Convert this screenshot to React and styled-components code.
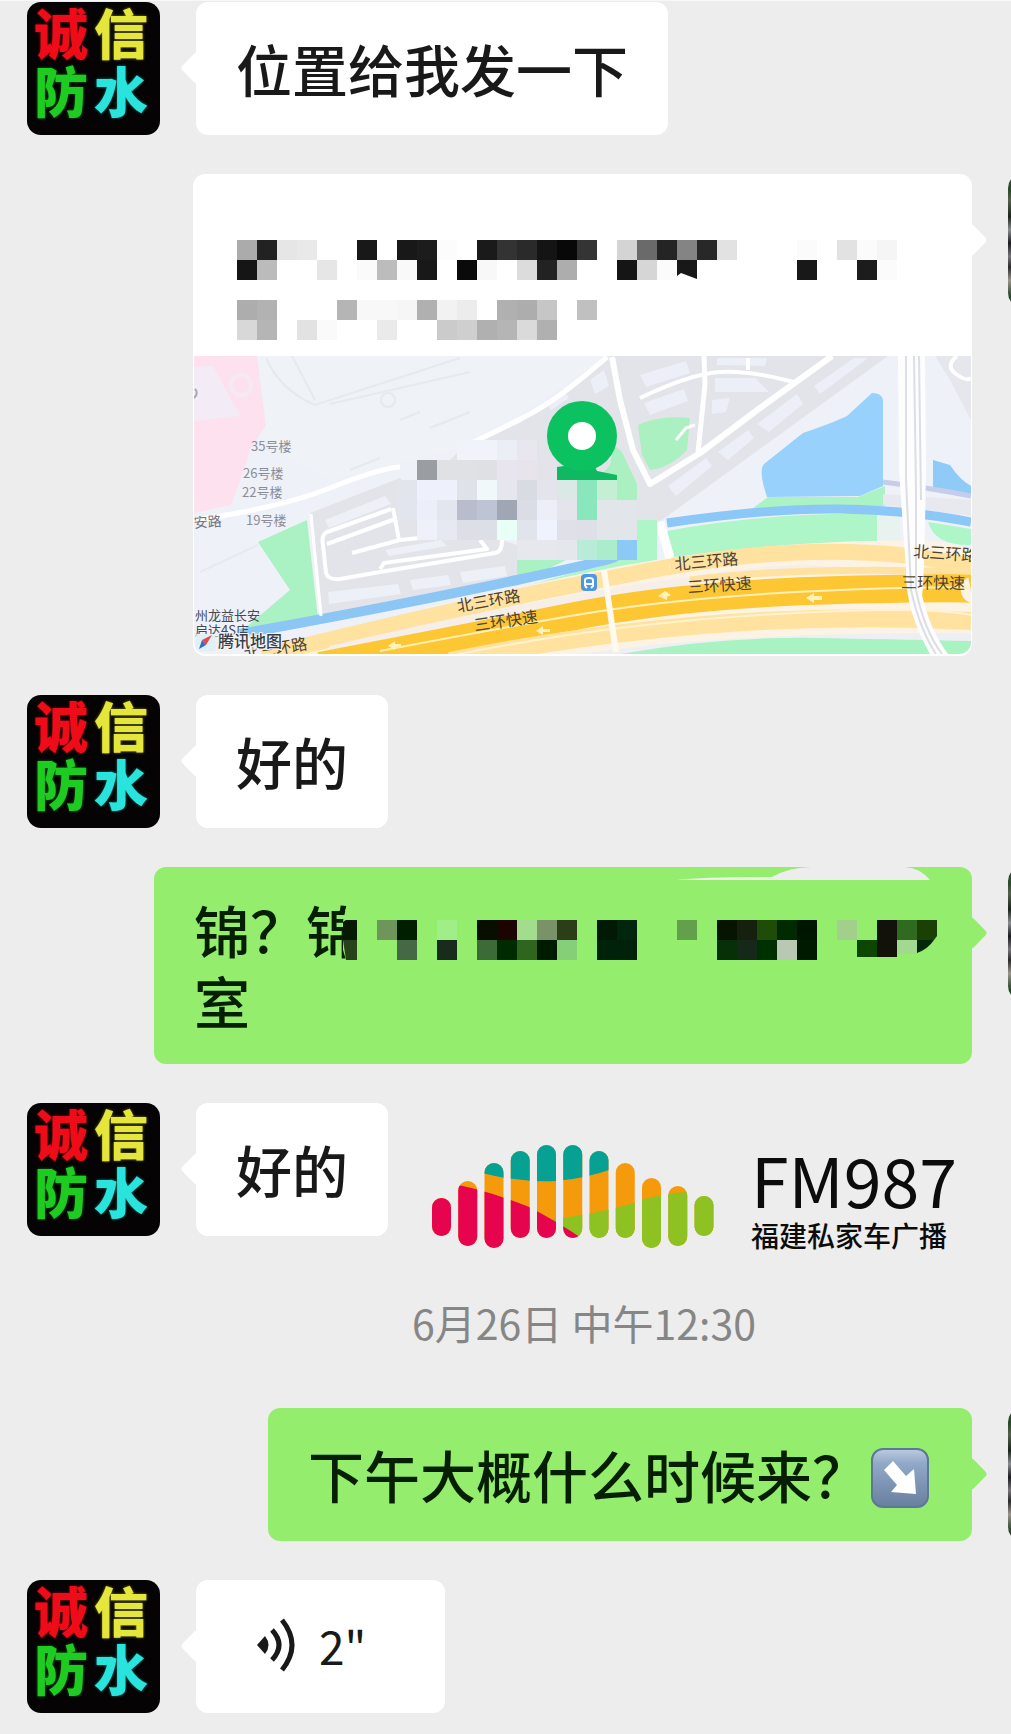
import React from "react";
import styled, { createGlobalStyle, css } from "styled-components";

const GlobalStyle = createGlobalStyle`
  *, *::before, *::after { box-sizing: border-box; }
  body {
    margin: 0;
    background: #ededed;
    color: #191919;
    font-family: "Noto Sans CJK SC", "Liberation Sans", sans-serif;
    overflow-x: hidden;
  }
`;

const Chat = styled.main`
  display: flex;
  flex-direction: column;
  gap: 39px;
  padding: 1px 0 21px;
  border-top: 1px solid #f8f8f8;
  overflow: hidden;
`;

const Row = styled.article`
  position: relative;
  display: flex;
  align-items: flex-start;
  gap: 36px;
  padding-left: ${(p) => p.$indent || 27}px;
  ${(p) => p.$mine && css`justify-content: flex-end;`}
`;

const AvatarTile = styled.div`
  flex: none;
  width: 133px;
  height: 133px;
  display: grid;
  grid-template-columns: 60px 60px;
  grid-template-rows: 58px 58px;
  justify-content: center;
  padding: 1px 5px 0 0;
  border-radius: 14px;
  background: #050303;
  font-size: 54px;
  font-weight: 900;
  line-height: 58px;
  text-align: center;
`;

const Glyph = styled.span`
  color: ${(p) => p.$color};
  text-shadow: 0 0 3px ${(p) => p.$color}88;
`;

const OwnAvatar = styled.div`
  flex: none;
  width: 133px;
  height: 133px;
  margin-right: -130px;
  border-radius: 14px;
  background: linear-gradient(
    #2c4a2c 0 12%, #55604e 20%, #1c241c 32%, #8b8d90 42%,
    #1b1b20 52%, #77757a 62%, #2b2b2b 70%, #9a948c 80%, #27452a 92%
  );
`;

const Bubble = styled.div`
  position: relative;
  min-height: 133px;
  min-width: ${(p) => p.$minWidth || 0}px;
  flex: ${(p) => (p.$fill ? "1 1 0" : "0 1 auto")};
  display: flex;
  align-items: center;
  padding: 26px 40px 29px;
  border-radius: 12px;
  background: ${(p) => (p.$mine ? "#95ed6e" : "#ffffff")};
  color: ${(p) => (p.$mine ? "#061f02" : "#191919")};

  &::before {
    content: "";
    position: absolute;
    top: 54px;
    ${(p) => (p.$mine || p.$card ? "right: -11px;" : "left: -11px;")}
    width: 24px;
    height: 24px;
    border-radius: 4px;
    background: inherit;
    transform: rotate(45deg);
  }

  ${(p) => p.$card && css`
    flex-direction: column;
    align-items: stretch;
    padding: 0 1px 2px;
  `}
`;

const Message = styled.p`
  position: relative;
  margin: 0;
  font-size: 56px;
  font-weight: 500;
  line-height: 71px;
`;

const VoiceButton = styled.button`
  display: flex;
  align-items: center;
  gap: 24px;
  margin: 0;
  padding: 0 0 0 21px;
  border: 0;
  background: none;
  color: inherit;
  font: inherit;
  font-size: 46px;
  line-height: 71px;
`;

const ArrowEmoji = styled.svg`
  display: inline-block;
  width: 58px;
  height: 60px;
  margin: 0 3px;
  vertical-align: -10px;
`;

const PlaceHead = styled.header`
  height: 182px;
  padding: 66px 0 0 43px;
  overflow: hidden;
`;

const HeadMosaic = styled.svg`
  display: block;
  width: 660px;
  height: 100px;
`;

const MapFrame = styled.svg`
  display: block;
  width: 100%;
  height: auto;
  border-radius: 0 0 12px 12px;
`;

const BubbleMosaic = styled.svg`
  position: absolute;
  left: 0;
  top: 0;
  width: 818px;
  height: 110px;
`;

const TimeLine = styled.time`
  display: block;
  padding: 17px 39px 17px 196px;
  text-align: center;
  font-size: 41px;
  line-height: 60px;
  color: #868686;
`;

const Station = styled.aside`
  position: absolute;
  top: 42px;
  right: 60px;
  display: flex;
  gap: 36px;
`;

const Bars = styled.svg`
  flex: none;
  width: 283px;
  height: 104px;
`;

const StationText = styled.div`
  display: flex;
  flex-direction: column;
  width: 200px;
  color: #0c0c0c;
`;

const StationName = styled.strong`
  font-size: 68px;
  font-weight: 400;
  line-height: 68px;
`;

const StationSub = styled.span`
  font-size: 28px;
  font-weight: 500;
  line-height: 44px;
`;

const CELL = 20;

function Cells({ x, y, rows }) {
  return rows.map((row, r) =>
    Object.entries(row).map(([i, color]) => (
      <rect
        key={`${r}-${i}`}
        x={x + Number(i) * CELL}
        y={y + r * CELL}
        width={CELL}
        height={CELL}
        fill={color}
        shapeRendering="crispEdges"
      />
    ))
  );
}

const titleCells = [
  { 0: "#ababab", 1: "#222222", 2: "#e6e6e6", 3: "#e9e9e9", 6: "#181818", 8: "#181818", 9: "#1c1c1c", 10: "#fcfcfc", 12: "#1a1a1a", 13: "#333333", 14: "#2a2a2a", 15: "#141414", 16: "#080808", 17: "#343434", 19: "#d4d4d4", 20: "#6a6a6a", 21: "#242424", 22: "#848484", 23: "#282828", 24: "#e2e2e2", 28: "#fbfbfb", 30: "#e2e2e2", 31: "#fbfbfb", 32: "#f5f5f5" },
  { 0: "#151515", 1: "#bbbbbb", 4: "#e6e6e6", 6: "#fafafa", 7: "#bcbcbc", 8: "#f9f9f9", 9: "#181818", 11: "#0a0a0a", 12: "#f8f8f8", 14: "#dcdcdc", 15: "#222222", 16: "#adadad", 19: "#151515", 20: "#d6d6d6", 21: "#fbfbfb", 22: "#181818", 28: "#181818", 31: "#1c1c1c", 32: "#fbfbfb" },
  {},
  { 0: "#adadad", 1: "#b2b2b2", 5: "#b5b5b5", 6: "#f8f8f8", 7: "#f8f8f8", 8: "#f6f6f6", 9: "#b0b0b0", 10: "#f2f2f2", 11: "#ececec", 13: "#b0b0b0", 14: "#adadad", 15: "#c6c6c6", 17: "#c0c0c0" },
  { 0: "#d8d8d8", 1: "#b5b5b5", 3: "#e2e2e2", 4: "#fafafa", 7: "#eaeaea", 10: "#cbcbcb", 11: "#cfcfcf", 12: "#b0b0b0", 13: "#b5b5b5", 14: "#dadada", 15: "#b0b0b0" },
];

const addressCells = [
  { 7: "#6f965a", 8: "#001f00", 10: "#a0ee88", 12: "#080f00", 13: "#1c0400", 14: "#a3dc8c", 15: "#7a9268", 16: "#2c3e18", 18: "#001a06", 19: "#00260e", 22: "#63a04b", 24: "#071500", 25: "#16200e", 26: "#1f4d08", 27: "#002b00", 28: "#001500", 30: "#a3cf8c", 32: "#12120a", 33: "#2f6a20" },
  { 8: "#456845", 10: "#182b1c", 12: "#3c6b38", 13: "#002a00", 14: "#2f651e", 15: "#001c00", 16: "#84cf78", 18: "#00220a", 19: "#00220a", 24: "#073008", 25: "#16281a", 26: "#003000", 27: "#b9c8b2", 28: "#001a00" },
];

const mapCells = [
  { 11: "#f1f3fb", 12: "#f1f3fb", 13: "#eceef5", 14: "#e8e6ee" },
  { 9: "#9a9ea2", 10: "#e0e1e5", 11: "#e0e1e5", 12: "#dfe0e4", 13: "#e8e5ee", 14: "#e8e4ec", 15: "#e4e3ea", 16: "#dfe1e6" },
  { 8: "#e3e5ec", 9: "#eef1fb", 10: "#eef0fb", 11: "#dfe2e9", 12: "#f1f8fa", 13: "#e6e6ef", 14: "#d8dbe1", 15: "#e4e5ec", 16: "#dbe9e6", 17: "#8ae6bd", 18: "#c4efd4" },
  { 8: "#e3e5ec", 9: "#eceffa", 10: "#e3e5ef", 11: "#b9bccd", 12: "#bdc4d3", 13: "#a1a6b4", 14: "#dbdde6", 15: "#eceef8", 16: "#e3e4ec", 17: "#8ae6bd", 18: "#e2e5ea", 19: "#e2e5ea" },
  { 9: "#eff1fa", 10: "#e6e9f2", 11: "#dcdfe6", 12: "#dcdfe6", 13: "#e8fff8", 14: "#e2e4ec", 15: "#eff3fe", 16: "#e0e0e8", 17: "#dfdfe8", 18: "#e2e5ea", 19: "#e2e5ea", 20: "#aef5c8" },
  { 14: "#e6e8ee", 15: "#e6e8ee", 16: "#e4e7eb", 17: "#b9ecd8", 18: "#abeccd", 19: "#8dc9f7", 20: "#aef5c8" },
];

function ContactAvatar() {
  return (
    <AvatarTile>
      <Glyph $color="#ee0c18">诚</Glyph>
      <Glyph $color="#e4e63c">信</Glyph>
      <Glyph $color="#1ecb20">防</Glyph>
      <Glyph $color="#28e4dc">水</Glyph>
    </AvatarTile>
  );
}

const mapLabels = [
  { x: 458, y: 612, a: -10, t: "北三环路" },
  { x: 475, y: 631, a: -8, t: "三环快速" },
  { x: 675, y: 570, a: -5, t: "北三环路" },
  { x: 688, y: 593, a: -4, t: "三环快速" },
  { x: 913, y: 557, a: 4, t: "北三环路" },
  { x: 901, y: 588, a: 1, t: "三环快速" },
];

const buildingLabels = [
  { x: 251, y: 451, t: "35号楼" },
  { x: 243, y: 478, t: "26号楼" },
  { x: 242, y: 497, t: "22号楼" },
  { x: 246, y: 525, t: "19号楼" },
];

function LocationMap() {
  return (
    <MapFrame viewBox="194 356 777 298" role="img" aria-label="腾讯地图">
      <rect x="194" y="356" width="777" height="298" fill="#eff1f9" />
      <path d="M250 356H610L463 447L330 480L262 440Z" fill="#eff2f7" />
      <path d="M463 447L520 423L610 356H888L662 520L560 550L440 470Z" fill="#e3e4e9" />
      <path d="M935 356H971V420L950 380Z" fill="#e6e7ec" />
      <path d="M194 356H257L262 395L266 425L250 450L244 470L231 505L194 513Z" fill="#fde1ee" />
      <path d="M194 367L213 366L240 416L194 421Z" fill="#f3ecf6" />
      <circle cx="241" cy="385" r="10" fill="none" stroke="#f5e9f4" strokeWidth="4" />
      <g fill="none" stroke="#e6e9f0" strokeWidth="2">
        <path d="M266 358Q280 390 315 405L460 358" />
        <path d="M292 356L315 400M330 404L470 372M200 572L258 545" />
        <circle cx="388" cy="400" r="7" />
        <path d="M400 420l20-8M430 428l40-16M350 470l30-12" />
      </g>
      <path d="M310 513L400 478L440 520L517 545V580L323 616Z" fill="#e3e4ea" />
      <g fill="#eef0f7">
        <path d="M325 520l60-24 6 8-62 24zM328 592l70-8 3 10-72 10zM410 580l38-5 3 10-38 5zM460 572l45-6 2 10-44 7z" />
        <path d="M385 550l56-10 6 6-58 10z" />
      </g>
      <g fill="#eceef8">
        <path d="M640 375l46-14 4 12-44 14zM644 403l40-14 4 12-38 14zM715 378h40l14 14h-54zM712 400l18-2-4 14-14 2zM717 358h50l-2 8-48-1z" />
        <path d="M757 424l40-30 6 10-34 28zM718 452l30-22 6 8-26 22zM668 486l38-28 6 8-36 30zM814 386l40-28h14l-48 36z" />
        <path d="M545 400l18-12 6 10-18 12zM590 380l14-10 5 16-14 8z" />
      </g>
      <path d="M258 542L307 520L318 619L238 634L290 590Z" fill="#aaf1c3" />
      <path d="M517 553L566 560L540 573L517 580Z" fill="#aaf1c3" />
      <path d="M638 425Q660 415 690 418L687 450Q670 468 650 470L642 455Z" fill="#abf0c0" />
      <path d="M614 445L622 452L637 484V500H597V480L610 465Z" fill="#abf0c0" />
      <path d="M872 393Q882 393 883 400V486L860 496L767 497Q758 470 764 464L803 433Q835 422 847 416Z" fill="#97d1fc" />
      <path d="M753 508L768 497H858L885 486V506Z" fill="#abf3c4" />
      <path d="M933 460L950 465Q960 480 971 486V496L933 488Z" fill="#90cbf8" />
      <path d="M883 482Q930 488 971 496" fill="none" stroke="#c5cdea" strokeWidth="5" />
      <path d="M883 494L971 500V516L883 505Z" fill="#e8e9ef" />
      <path d="M667 531Q770 512 877 514V541Q750 548 673 562Z" fill="#aef5c8" />
      <path d="M877 514H900V548H877Z" fill="#e8f3ef" />
      <path d="M928 522L971 529V545Q935 546 928 522Z" fill="#aef5c8" />
      <path d="M667 523Q770 508 840 509T971 522" fill="none" stroke="#8cc8f7" strokeWidth="9" />
      <path d="M600 565L657 548L655 560L590 578L520 588Z" fill="#aef5c8" />
      <path d="M240 634Q400 605 517 580T612 556" fill="none" stroke="#8cc6f4" strokeWidth="10" />
      <g fill="none" stroke="#ffffff" strokeLinejoin="round">
        <path d="M463 447Q500 430 530 414T607 357" strokeWidth="5" />
        <path d="M194 520Q280 508 330 488T400 467" strokeWidth="5" />
        <path d="M311 514L321 616" strokeWidth="3" />
        <path d="M391 509L327 532Q321 535 323 545L326 573Q328 580 340 579L380 572L495 553Q502 552 502 540" strokeWidth="4" />
        <path d="M327 544L398 518M393 508L399 540M352 553L400 540L440 536M380 569L384 563L487 549L480 540" strokeWidth="4" />
        <path d="M612 357L620 400L633 450L650 484L700 453L760 408L832 356" strokeWidth="6" />
        <path d="M704 356L705 385L698 452" strokeWidth="5" />
        <path d="M640 398Q690 374 720 372T797 383M748 358V370" strokeWidth="4" />
        <path d="M676 440L686 428L695 425" strokeWidth="3" />
        <path d="M957 356Q945 366 956 374T971 378" strokeWidth="4" />
      </g>
      <path d="M262 654Q457 600 580 574T837 542T971 554V640Q800 632 570 654Z" fill="#fdf3e4" />
      <path d="M262 656Q457 608 580 584T670 567Q837 537 971 566" fill="none" stroke="#ffe2a0" strokeWidth="16" />
      <path d="M330 650Q500 610 640 588T810 569T971 573" fill="none" stroke="#f5eee9" strokeWidth="8" />
      <path d="M690 580Q800 566 971 572" fill="none" stroke="#ffe2a0" strokeWidth="7" />
      <path d="M320 666Q457 640 570 617T840 590T971 591" fill="none" stroke="#fcc733" strokeWidth="28" />
      <path d="M380 651Q457 636 570 616T840 590T971 591" fill="none" stroke="#ffeeb5" strokeWidth="2" />
      <path d="M450 661Q570 636 703 625T971 621" fill="none" stroke="#ffe2a0" strokeWidth="18" />
      <path d="M450 656Q600 625 760 615T971 615" fill="none" stroke="#fff2cd" strokeWidth="2" />
      <path d="M560 658Q700 632 971 633V644Q700 640 600 656Z" fill="#eeeff4" />
      <path d="M615 655Q720 636 820 638T971 641V655Z" fill="#a9f2c2" />
      <g fill="none" stroke="#fffaf0" strokeWidth="6">
        <path d="M604 570L616 652" />
        <path d="M660 522L670 558" stroke="#ffffff" strokeWidth="9" />
      </g>
      <g fill="#fff1b8">
        <path d="M388 646l7-5v3h6v3h-6v3zM536 631l7-5v3h7v3h-7v3zM658 596l7-5 6 4-4 2v3zM806 598l8-5v3h8v4h-8v3z" />
      </g>
      <path d="M898 356H925L926 470Q924 590 922 595Q930 630 948 654H930Q905 610 906 570L899 470Z" fill="#fdfdfe" />
      <g fill="none" stroke="#dcdee4" strokeWidth="2">
        <path d="M906 356V480L911 590Q920 630 936 654" />
        <path d="M914 356L916 490V590Q924 630 942 654" />
        <path d="M919 356L921 500" />
      </g>
      <Cells x={237} y={440} rows={mapCells} />
      <path d="M557 467L572 465H594L597 471L617 475V480H557Z" fill="#0fb962" />
      <circle cx="582" cy="436" r="24" fill="#ffffff" stroke="#0bc160" strokeWidth="22" />
      <rect x="581" y="574" width="16" height="17" rx="4" fill="#4d97e6" />
      <path d="M585 586V580Q585 578 589 578T593 580V586L591 588M587 588L585 586M585 584H593" fill="none" stroke="#ffffff" strokeWidth="2" />
      <circle cx="582" cy="436" r="14" fill="#ffffff" />
      <g fontFamily='"Noto Sans CJK SC", sans-serif' fontSize="13" fill="#8b8d96">
        {buildingLabels.map((l) => (
          <text key={l.t} x={l.x} y={l.y}>{l.t}</text>
        ))}
        <text x="194" y="528" fontSize="14" fill="#72747c" transform="rotate(-4 194 528)">安路</text>
      </g>
      <path d="M195 389q4 4-1 9" fill="none" stroke="#a9a9b3" strokeWidth="2" />
      <g fontFamily='"Noto Sans CJK SC", sans-serif' fontSize="16" fill="#4e4330">
        {mapLabels.map((l) => (
          <text key={`${l.x}`} x={l.x} y={l.y} transform={`rotate(${l.a} ${l.x} ${l.y})`}>{l.t}</text>
        ))}
        <text x="245" y="660" transform="rotate(-10 245 660)">北三环路</text>
        <text x="195" y="620" fontSize="13" fill="#454852">州龙益长安</text>
        <text x="195" y="635" fontSize="13" fill="#454852">启达4S店</text>
      </g>
      <path d="M196 634H282V650H196Z" fill="#eaf0f2" fillOpacity="0.6" />
      <rect x="196" y="634" width="19" height="17" rx="3" fill="#e2f0f6" />
      <path d="M212 635L202 640L206 645Z" fill="#e14b4b" />
      <path d="M199 649L202 640L206 645Z" fill="#2f6fc6" />
      <text
        x="218"
        y="647"
        fontFamily='"Noto Sans CJK SC", sans-serif'
        fontSize="16"
        fontWeight="500"
        fill="#3a3d46"
        stroke="#f2f5f7"
        strokeWidth="2"
        paintOrder="stroke"
      >
        腾讯地图
      </text>
    </MapFrame>
  );
}

const bars = [
  [53, 91], [36, 101], [18, 103], [6, 93], [0, 93], [0, 93],
  [6, 93], [18, 93], [33, 103], [41, 101], [51, 91],
];

function StationLogo() {
  return (
    <Bars viewBox="0 0 283 104" aria-hidden="true">
      <clipPath id="bars">
        {bars.map(([top, bottom], i) => (
          <rect key={i} x={i * 26.25} y={top} width="19" height={bottom - top} rx="9.5" />
        ))}
      </clipPath>
      <g clipPath="url(#bars)">
        <rect width="283" height="104" fill="#f59a0a" />
        <path d="M50 0V28Q90 38 125 36Q155 33 180 24V0Z" fill="#06a193" />
        <path d="M120 74Q160 70 202 58Q222 49 256 47L262 30H283V104H120Z" fill="#8ec122" />
        <path d="M0 36L26 40Q60 47 97 62Q128 78 152 95V104H0Z" fill="#e6044f" />
      </g>
    </Bars>
  );
}

export default function App() {
  return (
    <>
      <GlobalStyle />
      <Chat>
        <Row>
          <ContactAvatar />
          <Bubble><Message>位置给我发一下</Message></Bubble>
        </Row>

        <Row $mine $indent={193}>
          <Bubble $card $fill>
            <PlaceHead>
              <HeadMosaic viewBox="0 0 660 100" aria-hidden="true">
                <Cells x={0} y={0} rows={titleCells} />
                <path d="M440 36l4-3 16 6v2h-20z" fill="#ffffff" />
              </HeadMosaic>
            </PlaceHead>
            <LocationMap />
          </Bubble>
          <OwnAvatar />
        </Row>

        <Row>
          <ContactAvatar />
          <Bubble><Message>好的</Message></Bubble>
        </Row>

        <Row $mine $indent={154}>
          <Bubble $mine $fill>
            <Message>锦{"\uFF1F"}锦<br />室</Message>
            <BubbleMosaic viewBox="154 867 818 110" aria-hidden="true">
              <path d="M677 880Q700 877 772 877Q790 867 812 867H905Q920 868 930 880Z" fill="#ededed" />
              <path d="M349 895H365V960H346L343 950V921Z" fill="#95ed6e" />
              <path d="M343 922L346 920H357V940H343Z" fill="#051a00" />
              <path d="M343 940H357V960H346Z" fill="#27421a" />
              <Cells x={237} y={920} rows={addressCells} />
              <path d="M857 940H877V957H857Z" fill="#0c4600" />
              <path d="M877 940H897V957H877Z" fill="#12120a" />
              <path d="M897 940H917V954H897Z" fill="#a3d890" />
              <path d="M917 920H937V936L934 940H917Z" fill="#1a4006" />
              <path d="M917 940H934Q928 949 917 953Z" fill="#04280a" />
            </BubbleMosaic>
          </Bubble>
          <OwnAvatar />
        </Row>

        <Row>
          <ContactAvatar />
          <Bubble><Message>好的</Message></Bubble>
          <Station>
            <StationLogo />
            <StationText>
              <StationName>FM987</StationName>
              <StationSub>福建私家车广播</StationSub>
            </StationText>
          </Station>
        </Row>

        <TimeLine>6月26日 中午12:30</TimeLine>

        <Row $mine>
          <Bubble $mine>
            <Message>
              下午大概什么时候来{"\uFF1F"}
              <ArrowEmoji viewBox="0 0 58 60" role="img" aria-label="右下箭头">
                <defs>
                  <linearGradient id="key" x1="0" y1="0" x2="0" y2="1">
                    <stop offset="0" stopColor="#bccbe0" />
                    <stop offset="0.25" stopColor="#92a8c8" />
                    <stop offset="1" stopColor="#687f9f" />
                  </linearGradient>
                </defs>
                <rect x="1" y="1" width="56" height="58" rx="11" fill="url(#key)" stroke="#5d7896" strokeWidth="2" />
                <path d="M22 13L35 28L43 21L45 46L20 44L26 37L13 22Z" fill="#ffffff" />
              </ArrowEmoji>
            </Message>
          </Bubble>
          <OwnAvatar />
        </Row>

        <Row>
          <ContactAvatar />
          <Bubble $minWidth={249}>
            <VoiceButton type="button">
              <svg width="38" height="54" viewBox="0 0 38 54" aria-hidden="true">
                <path d="M0 27L8 18Q15 27 8 36Z" fill="#191919" />
                <path d="M15 12Q29 27 15 42M25 2Q45 27 25 52" fill="none" stroke="#191919" strokeWidth="5" />
              </svg>
              2"
            </VoiceButton>
          </Bubble>
        </Row>
      </Chat>
    </>
  );
}
